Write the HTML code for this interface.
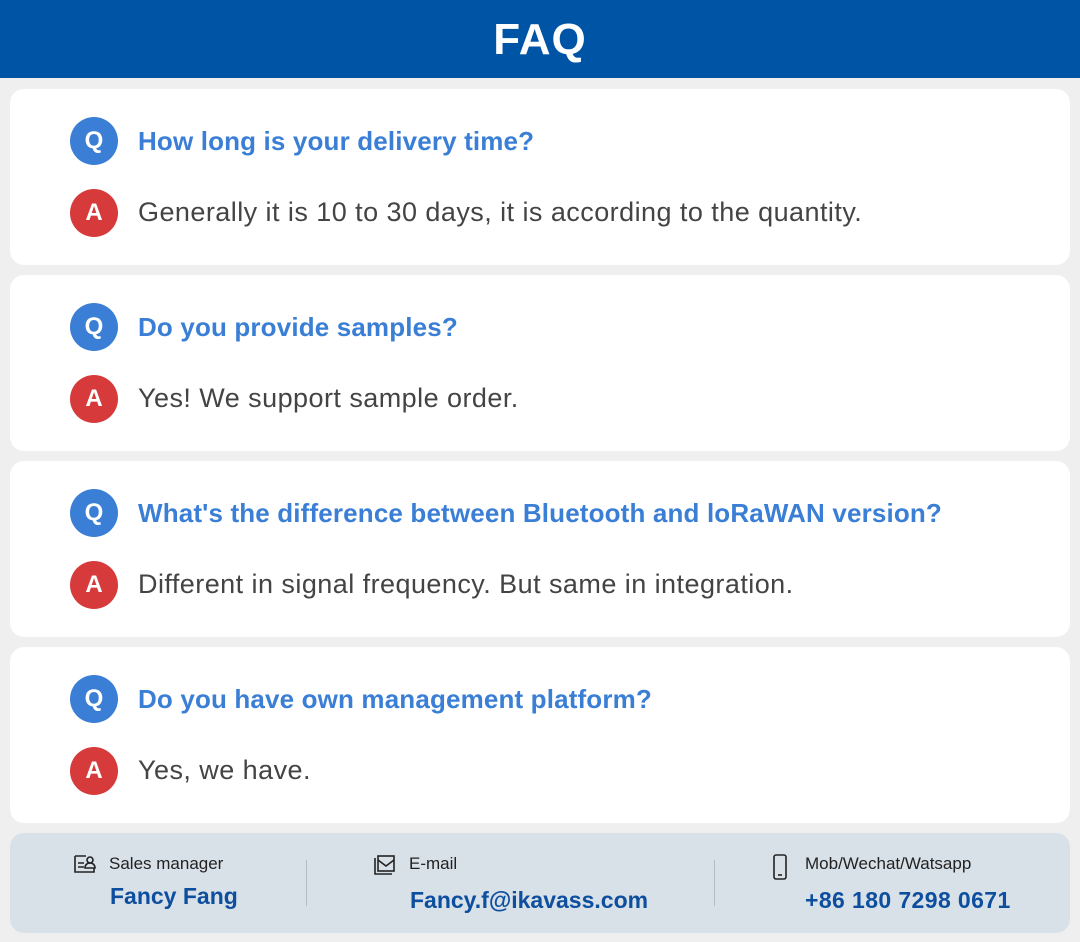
<!DOCTYPE html>
<html><head><style>
*{margin:0;padding:0;box-sizing:border-box}
body{width:1080px;height:942px;background:#efefef;font-family:"Liberation Sans",sans-serif;position:relative;overflow:hidden}
.hdr{position:absolute;left:0;top:0;width:1080px;height:78px;background:#0054a6;color:#fff;font-size:44px;font-weight:bold;text-align:center;line-height:80px;letter-spacing:1px}
.card{position:absolute;left:10px;width:1060px;height:176px;background:#fff;border-radius:14px}
.c{position:absolute;left:60px;width:48px;height:48px;border-radius:50%;color:#fff;font-weight:bold;font-size:24px;text-align:center;line-height:48px}
.q{background:#3a7fd5;top:28px}
.a{background:#d63a3a;top:100px}
.qt{position:absolute;left:128px;top:37px;font-size:26px;font-weight:bold;color:#3a7fd5;white-space:nowrap;letter-spacing:0.15px}
.at{position:absolute;left:128px;top:108px;font-size:27px;color:#444;white-space:nowrap;letter-spacing:0.45px}
.ft{position:absolute;left:10px;top:833px;width:1060px;height:100px;background:#d8e0e8;border-radius:14px}
.lb{position:absolute;font-size:17px;color:#222;top:21px}
.vl{position:absolute;font-size:23px;font-weight:bold;color:#0d4f9e}
.dv{position:absolute;top:27px;width:1px;height:46px;background:#b5bcc4}
svg{position:absolute}
</style></head><body>
<div class="hdr">FAQ</div>
<div class="card" style="top:89px"><div class="c q">Q</div><div class="qt">How long is your delivery time?</div><div class="c a">A</div><div class="at">Generally it is 10 to 30 days, it is according to the quantity.</div></div>
<div class="card" style="top:275px"><div class="c q">Q</div><div class="qt">Do you provide samples?</div><div class="c a">A</div><div class="at">Yes! We support sample order.</div></div>
<div class="card" style="top:461px"><div class="c q">Q</div><div class="qt">What's the difference between Bluetooth and loRaWAN version?</div><div class="c a">A</div><div class="at">Different in signal frequency. But same in integration.</div></div>
<div class="card" style="top:647px"><div class="c q">Q</div><div class="qt">Do you have own management platform?</div><div class="c a">A</div><div class="at">Yes, we have.</div></div>
<div class="ft">
<svg style="left:64px;top:21px" width="22" height="20" viewBox="0 0 22 20" fill="none" stroke="#222" stroke-width="1.6"><path d="M1 2h11M1 2v16h19v-4M4 9h6M4 13h6"/><circle cx="16" cy="6" r="3"/><path d="M11 14c0-3 2-5 5-5s5 2 5 5z"/></svg>
<div class="lb" style="left:99px">Sales manager</div>
<div class="vl" style="left:100px;top:50px">Fancy Fang</div>
<div class="dv" style="left:296px"></div>
<svg style="left:364px;top:22px" width="22" height="20" viewBox="0 0 22 20" fill="none" stroke="#222" stroke-width="1.6"><path d="M1 3v16h17"/><rect x="4" y="1" width="16" height="15"/><path d="M4 5l8 6 8-6"/></svg>
<div class="lb" style="left:399px">E-mail</div>
<div class="vl" style="left:400px;top:54px">Fancy.f@ikavass.com</div>
<div class="dv" style="left:704px"></div>
<svg style="left:763px;top:21px" width="14" height="26" viewBox="0 0 14 26" fill="none" stroke="#222" stroke-width="1.6"><rect x="1" y="1" width="12" height="24" rx="2"/><path d="M5 21h4"/></svg>
<div class="lb" style="left:795px">Mob/Wechat/Watsapp</div>
<div class="vl" style="left:795px;top:54px;letter-spacing:0.4px">+86 180 7298 0671</div>
</div>
</body></html>
